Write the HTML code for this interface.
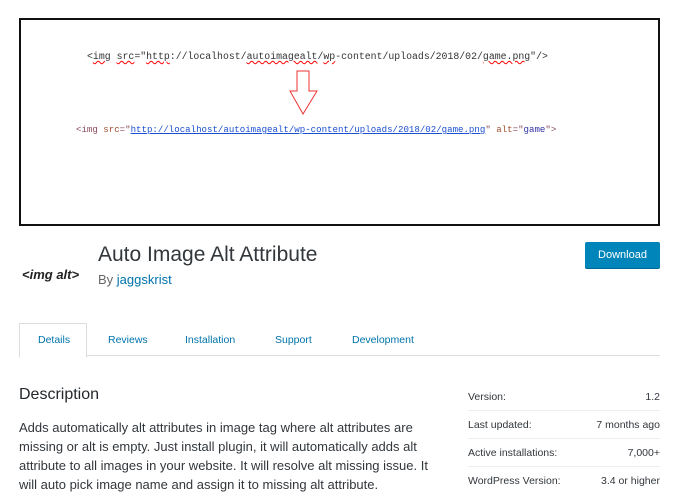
<!DOCTYPE html>
<html><head><style>
body{margin:0;width:680px;height:495px;overflow:hidden;background:#fff;font-family:"Liberation Sans",sans-serif;position:relative;color:#32373c}
.a{position:absolute;white-space:nowrap}
.banner{position:absolute;left:19px;top:18px;width:637px;height:204px;border:2px solid #111;background:#fff}
.code{font-family:"Liberation Mono",monospace}
.w{text-decoration:underline;text-decoration-color:red;text-decoration-style:wavy}
.row{height:28px;line-height:28px;border-bottom:1px solid #eee;display:flex;justify-content:space-between;box-sizing:border-box}
</style></head><body>
<div class="banner">
 <div class="a code" style="left:66px;top:31px;font-size:9.85px;color:#333">&lt;<span class="w">img</span> <span class="w">src</span>="<span class="w">http</span>://localhost/<span class="w">autoimagealt</span>/<span class="w">wp</span>-content/uploads/2018/02/<span class="w">game.png</span>"/&gt;</div>
 <svg class="a" style="left:268px;top:50px" width="30" height="46"><path d="M8 1H20V21H28L14 44L1 21H8Z" fill="none" stroke="#e33" stroke-width="1"/></svg>
 <div class="a code" style="left:55px;top:104px;font-size:9.1px;color:#8a4a5a">&lt;img <span style="color:#a05030">src</span>="<u style="color:#1a4fd0">http://localhost/autoimagealt/wp-content/uploads/2018/02/game.png</u>" <span style="color:#a05030">alt</span>="<span style="color:#3030a0">game</span>"&gt;</div>
</div>
<div class="a" style="left:22px;top:267px;font-size:13px;font-style:italic;font-weight:bold;color:#222">&lt;img alt&gt;</div>
<div class="a" style="left:98px;top:243px;font-size:21px;color:#32373c">Auto Image Alt Attribute</div>
<div class="a" style="left:98px;top:272px;font-size:13px;color:#666">By <span style="color:#0073aa">jaggskrist</span></div>
<div class="a" style="left:585px;top:242px;width:75px;height:26px;background:#0085ba;border-radius:2px;box-shadow:0 1px 0 #006799;color:#fff;font-size:11px;display:flex;align-items:center;justify-content:center">Download</div>
<div class="a" style="left:86px;top:355px;width:574px;height:1px;background:#ddd"></div>
<div class="a" style="left:19px;top:323px;width:66px;height:33px;border:1px solid #ddd;border-bottom:1px solid #fff;background:#fff"></div>
<div class="a" style="top:334px;font-size:10.5px;color:#0073aa;left:38px">Details</div>
<div class="a" style="top:334px;font-size:10.5px;color:#0073aa;left:108px">Reviews</div>
<div class="a" style="top:334px;font-size:10.5px;color:#0073aa;left:185px">Installation</div>
<div class="a" style="top:334px;font-size:10.5px;color:#0073aa;left:275px">Support</div>
<div class="a" style="top:334px;font-size:10.5px;color:#0073aa;left:352px">Development</div>
<div class="a" style="left:19px;top:386px;font-size:16px;color:#23282d">Description</div>
<div class="a" style="left:19px;top:418px;font-size:13px;line-height:19px;color:#32373c">Adds automatically alt attributes in image tag where alt attributes are<br>missing or alt is empty. Just install plugin, it will automatically adds alt<br>attribute to all images in your website. It will resolve alt missing issue. It<br>will auto pick image name and assign it to missing alt attribute.</div>
<div class="a" style="left:468px;top:383px;width:192px;font-size:10.5px;color:#32373c">
 <div class="row"><span>Version:</span><span>1.2</span></div>
 <div class="row"><span>Last updated:</span><span>7 months ago</span></div>
 <div class="row"><span>Active installations:</span><span>7,000+</span></div>
 <div class="row" style="border:0"><span>WordPress Version:</span><span>3.4 or higher</span></div>
</div>
</body></html>
